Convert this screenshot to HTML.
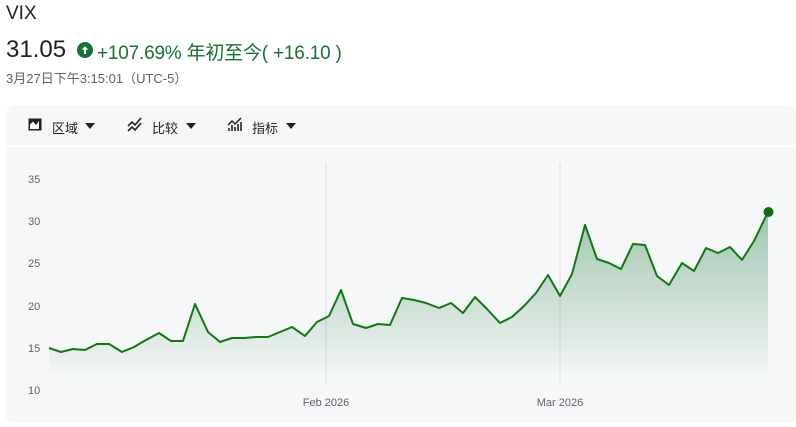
<!DOCTYPE html>
<html><head><meta charset="utf-8"><style>
*{margin:0;padding:0;box-sizing:border-box}
body{width:796px;height:427px;background:#fff;font-family:"Liberation Sans","Noto Sans CJK SC",sans-serif;position:relative;overflow:hidden;color:#202124}
.abs{position:absolute;white-space:nowrap}
</style></head><body>
<div class="abs" style="left:6px;top:3px;font-size:19px;color:#202124">VIX</div>
<div class="abs" style="left:6px;top:36px;font-size:24px;color:#202124">31.05</div>
<svg class="abs" style="left:77px;top:42px" width="16" height="16" viewBox="0 0 16 16"><circle cx="8" cy="8" r="8" fill="#137333"/><path d="M8 4.2L4.6 7.6h2.4V12h2V7.6h2.4z" fill="#fff"/></svg>
<div class="abs" style="left:97px;top:38px;font-size:19px;color:#137333;letter-spacing:-0.2px">+107.69% 年初至今( +16.10 )</div>
<div class="abs" style="left:6px;top:68px;font-size:13px;color:#5f6368">3月27日下午3:15:01（UTC-5）</div>
<div class="abs" style="left:6px;top:105px;width:790px;height:40px;background:#f6f7f9;border-radius:10px 10px 0 0"></div>
<div class="abs" style="left:6px;top:147px;width:790px;height:276px;background:#f6f7f9;border-radius:0 0 8px 8px"></div>
<svg class="abs" style="left:28px;top:118px" width="14" height="13" viewBox="0 0 14 13"><path d="M0.5 0.5h13v12h-13z" fill="#202124"/><path d="M2 11V6.5L5 3.5 8 7l3-4v8z" fill="#fff"/></svg>
<div class="abs" style="left:52px;top:118px;font-size:13px;color:#202124">区域</div>
<svg class="abs" style="left:85px;top:123px" width="10" height="6"><path d="M0 0h10L5 6z" fill="#202124"/></svg>
<svg class="abs" style="left:127px;top:117px" width="16" height="15" viewBox="0 0 16 15"><path d="M1 9l4-4 3 3 6-7M1 14l4-4 3 3 6-7" stroke="#202124" stroke-width="1.6" fill="none"/></svg>
<div class="abs" style="left:152px;top:118px;font-size:13px;color:#202124">比较</div>
<svg class="abs" style="left:186px;top:123px" width="10" height="6"><path d="M0 0h10L5 6z" fill="#202124"/></svg>
<svg class="abs" style="left:227px;top:117px" width="16" height="15" viewBox="0 0 16 15"><path d="M1 8l4-4 3 3 6-6" stroke="#202124" stroke-width="1.5" fill="none"/><path d="M2 14v-3M5 14v-6M8 14v-4M11 14v-7M14 14v-9" stroke="#202124" stroke-width="1.6"/></svg>
<div class="abs" style="left:252px;top:118px;font-size:13px;color:#202124">指标</div>
<svg class="abs" style="left:286px;top:123px" width="10" height="6"><path d="M0 0h10L5 6z" fill="#202124"/></svg>
<svg class="abs" style="left:0;top:0" width="796" height="427">
<defs><linearGradient id="g" gradientUnits="userSpaceOnUse" x1="0" y1="212" x2="0" y2="372"><stop offset="0" stop-color="#137333" stop-opacity="0.38"/><stop offset="1" stop-color="#137333" stop-opacity="0.02"/></linearGradient></defs>
<line x1="326" y1="163" x2="326" y2="385" stroke="#dadce0" stroke-width="1"/>
<line x1="560" y1="163" x2="560" y2="385" stroke="#dadce0" stroke-width="1"/>
<g font-size="11" fill="#5f6368" font-family="Liberation Sans,sans-serif">
<text x="28" y="183">35</text><text x="28" y="225">30</text><text x="28" y="267">25</text><text x="28" y="310">20</text><text x="28" y="352">15</text><text x="28" y="394">10</text>
<text x="326" y="406" text-anchor="middle">Feb 2026</text><text x="560" y="406" text-anchor="middle">Mar 2026</text></g>
<path d="M49,348 61,352 73,349 85,350 97,344 109,344 122,352 134,347 146,340 159,333 171,341 183,341 195,304 208,332 220,342 232,338 244,338 256,337 268,337 280,332 292,327 305,336 317,322 329,316 341,290 353,324 366,328 378,324 390,325 402,298 414,300 426,303 439,308 451,303 463,313 475,297 487,309 500,323 512,317 524,306 536,293 548,275 560,296 572,274 585,225 597,259 609,263 621,269 633,244 645,245 657,276 669,285 682,263 694,271 706,248 718,253 730,247 742,260 754,241 768,212 768,372 49,372Z" fill="url(#g)"/>
<path d="M49,348 61,352 73,349 85,350 97,344 109,344 122,352 134,347 146,340 159,333 171,341 183,341 195,304 208,332 220,342 232,338 244,338 256,337 268,337 280,332 292,327 305,336 317,322 329,316 341,290 353,324 366,328 378,324 390,325 402,298 414,300 426,303 439,308 451,303 463,313 475,297 487,309 500,323 512,317 524,306 536,293 548,275 560,296 572,274 585,225 597,259 609,263 621,269 633,244 645,245 657,276 669,285 682,263 694,271 706,248 718,253 730,247 742,260 754,241 768,212" fill="none" stroke="#0d7a0d" stroke-width="2" stroke-linejoin="round"/>
<circle cx="768.5" cy="212" r="5" fill="#0d6e0d"/>
</svg>
</body></html>
